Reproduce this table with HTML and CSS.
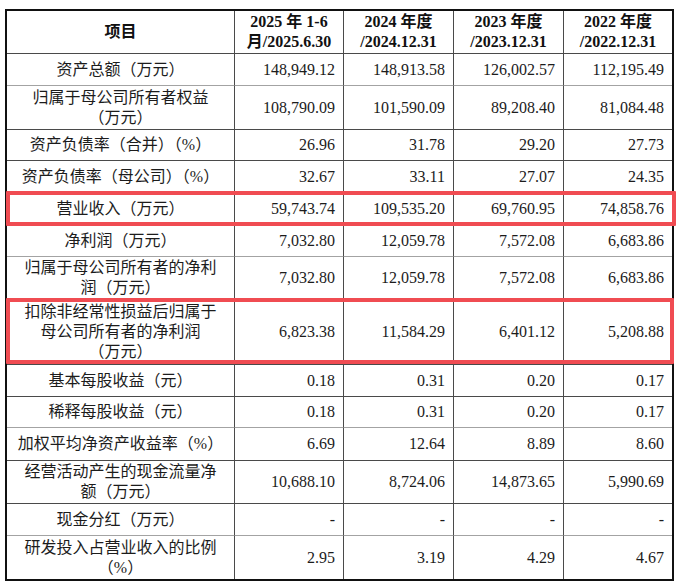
FILE: index.html
```html
<!DOCTYPE html>
<html lang="zh-CN">
<head>
<meta charset="utf-8">
<title>主要财务数据</title>
<link rel="stylesheet" href="styles.css">
</head>
<body>
<div class="wrap">
  <table class="fin">
    <colgroup>
      <col class="c1"><col class="c2"><col class="c3"><col class="c4"><col class="c5">
    </colgroup>
    <thead>
      <tr class="h43">
        <th>项目</th>
        <th>2025 年 1-6<br>月/2025.6.30</th>
        <th>2024 年度<br>/2024.12.31</th>
        <th>2023 年度<br>/2023.12.31</th>
        <th>2022 年度<br>/2022.12.31</th>
      </tr>
    </thead>
    <tbody>
      <tr class="h32 lt">
        <td class="lbl">资产总额（万元）</td>
        <td>148,949.12</td><td>148,913.58</td><td>126,002.57</td><td>112,195.49</td>
      </tr>
      <tr class="h44">
        <td class="lbl">归属于母公司所有者权益<br>（万元）</td>
        <td>108,790.09</td><td>101,590.09</td><td>89,208.40</td><td>81,084.48</td>
      </tr>
      <tr class="h31">
        <td class="lbl">资产负债率（合并）（%）</td>
        <td>26.96</td><td>31.78</td><td>29.20</td><td>27.73</td>
      </tr>
      <tr class="h32">
        <td class="lbl">资产负债率（母公司）（%）</td>
        <td>32.67</td><td>33.11</td><td>27.07</td><td>24.35</td>
      </tr>
      <tr class="h32">
        <td class="lbl">营业收入（万元）</td>
        <td>59,743.74</td><td>109,535.20</td><td>69,760.95</td><td>74,858.76</td>
      </tr>
      <tr class="h32 lt">
        <td class="lbl">净利润（万元）</td>
        <td>7,032.80</td><td>12,059.78</td><td>7,572.08</td><td>6,683.86</td>
      </tr>
      <tr class="h43">
        <td class="lbl">归属于母公司所有者的净利<br>润（万元）</td>
        <td>7,032.80</td><td>12,059.78</td><td>7,572.08</td><td>6,683.86</td>
      </tr>
      <tr class="h65">
        <td class="lbl">扣除非经常性损益后归属于<br>母公司所有者的净利润<br>（万元）</td>
        <td>6,823.38</td><td>11,584.29</td><td>6,401.12</td><td>5,208.88</td>
      </tr>
      <tr class="h32">
        <td class="lbl">基本每股收益（元）</td>
        <td>0.18</td><td>0.31</td><td>0.20</td><td>0.17</td>
      </tr>
      <tr class="h31 lt">
        <td class="lbl">稀释每股收益（元）</td>
        <td>0.18</td><td>0.31</td><td>0.20</td><td>0.17</td>
      </tr>
      <tr class="h33">
        <td class="lbl">加权平均净资产收益率（%）</td>
        <td>6.69</td><td>12.64</td><td>8.89</td><td>8.60</td>
      </tr>
      <tr class="h43">
        <td class="lbl">经营活动产生的现金流量净<br>额（万元）</td>
        <td>10,688.10</td><td>8,724.06</td><td>14,873.65</td><td>5,990.69</td>
      </tr>
      <tr class="h32 lt">
        <td class="lbl">现金分红（万元）</td>
        <td>-</td><td>-</td><td>-</td><td>-</td>
      </tr>
      <tr class="h43">
        <td class="lbl">研发投入占营业收入的比例<br>（%）</td>
        <td>2.95</td><td>3.19</td><td>4.29</td><td>4.67</td>
      </tr>
    </tbody>
  </table>
  <div class="mark mark-rev"></div>
  <div class="mark mark-np"></div>
</div>
</body>
</html>
```
FILE: styles.css
```css
html, body {
  margin: 0;
  padding: 0;
  background: #ffffff;
}

.wrap {
  position: relative;
  margin: 9px 0 0 5px;
  width: 669px;
}

.fin {
  box-sizing: border-box;
  width: 669px;
  table-layout: fixed;
  border-collapse: separate;
  border-spacing: 0;
  border: 2px solid #111111;
  font: 16px/20px "Liberation Serif", "Noto Sans CJK SC", serif;
  color: #1c1c1c;
}

.c1 { width: 228px; }
.c2 { width: 109px; }
.c3 { width: 110px; }
.c4 { width: 110px; }
.c5 { width: 108px; }

.fin th,
.fin td {
  box-sizing: border-box;
  padding: 0 8px 0 4px;
  border-right: 1px solid #4a4a4a;
  border-bottom: 1px solid #4a4a4a;
  vertical-align: middle;
  text-align: right;
  white-space: nowrap;
}

.fin th {
  font-weight: bold;
  text-align: center;
  color: #111111;
  padding: 0 2px;
}

.fin th:last-child,
.fin td:last-child {
  border-right: 0;
}

.fin tbody tr:last-child td {
  border-bottom: 0;
}

.fin td.lbl {
  text-align: center;
  padding: 0 2px;
}

.fin tr.lt > * {
  border-bottom-color: #a3a3a3;
}

.h31 > * { height: 31px; }
.h32 > * { height: 32px; }
.h33 > * { height: 33px; }
.h43 > * { height: 43px; }
.h44 > * { height: 44px; }
.h65 > * { height: 65px; }

.mark {
  position: absolute;
  box-sizing: border-box;
  border: 4px solid #f04c52;
  border-radius: 1px;
  pointer-events: none;
}

.mark-rev {
  left: 1px;
  top: 182px;
  width: 670px;
  height: 35px;
}

.mark-np {
  left: 1px;
  top: 289px;
  width: 668px;
  height: 66px;
}
```
